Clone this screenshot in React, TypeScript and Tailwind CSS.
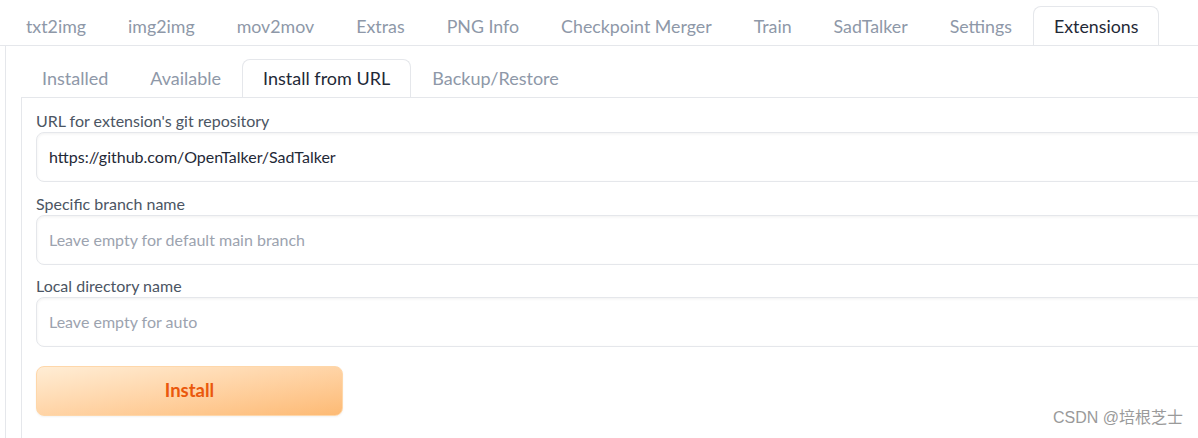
import React from "react";

const topTabs = ["txt2img", "img2img", "mov2mov", "Extras", "PNG Info", "Checkpoint Merger", "Train", "SadTalker", "Settings", "Extensions"];
const subTabs = ["Installed", "Available", "Install from URL", "Backup/Restore"];

function Field({ label, value, placeholder }: { label: string; value?: string; placeholder?: string }) {
  return (
    <div className="flex flex-col">
      <div className="text-[16px] leading-[20px] text-[#4b5563]">{label}</div>
      <div className="mt-[1px] h-[50px] rounded-[8px] border border-[#e5e7eb] bg-white shadow-[inset_0_1px_3px_rgba(0,0,0,0.06)] flex items-center pl-[12px] text-[16px]">
        {value ? <span className="text-[#1f2937]">{value}</span> : <span className="text-[#9ca3af]">{placeholder}</span>}
      </div>
    </div>
  );
}

export default function App() {
  return (
    <div className="relative w-[1198px] h-[438px] overflow-hidden bg-white" style={{ fontFamily: "Lato, 'Noto Sans', sans-serif" }}>
      <div className="flex pl-[5px] pt-[6px] border-b border-[#e5e7eb] w-[1260px]">
        {topTabs.map((t) => {
          const active = t === "Extensions";
          return (
            <div
              key={t}
              className={
                active
                  ? "px-[20px] h-[39px] flex items-center text-[17.8px] text-[#1f2937] border border-b-0 border-[#e5e7eb] rounded-t-[8px] bg-white -mb-px pt-[1px]"
                  : "px-[20px] h-[39px] flex items-center text-[17.8px] text-[#8e98a8] border border-transparent pt-[1px]"
              }
            >
              {t}
            </div>
          );
        })}
      </div>
      <div className="ml-[5px] border-l border-[#e5e7eb] pl-[15px] pt-[13px] w-[1260px] h-[400px]">
        <div className="flex border-b border-[#e5e7eb]">
          {subTabs.map((t) => {
            const active = t === "Install from URL";
            return (
              <div
                key={t}
                className={
                  active
                    ? "px-[20px] h-[38px] flex items-center text-[18px] text-[#1f2937] border border-b-0 border-[#e5e7eb] rounded-t-[8px] bg-white -mb-px"
                    : "px-[20px] h-[38px] flex items-center text-[18px] text-[#8e98a8] border border-transparent"
                }
              >
                {t}
              </div>
            );
          })}
        </div>
        <div className="border-l border-[#e5e7eb] pl-[14px] pt-[13px] h-[400px] flex flex-col gap-[11.5px]">
          <Field label="URL for extension's git repository" value="https://github.com/OpenTalker/SadTalker" />
          <Field label="Specific branch name" placeholder="Leave empty for default main branch" />
          <Field label="Local directory name" placeholder="Leave empty for auto" />
          <button className="mt-[7px] w-[307px] h-[50px] rounded-[8px] border border-[#fed7aa] bg-gradient-to-br from-[#ffedd5] to-[#fdba74] text-[#ea580c] text-[18.5px] font-bold shadow-[0_1px_2px_rgba(0,0,0,0.05)]">
            Install
          </button>
        </div>
      </div>
      <div className="absolute right-[15px] bottom-[8px] text-[16px] text-[#9a9a9a]" style={{ fontFamily: "'Liberation Sans', 'Noto Sans CJK SC', sans-serif" }}>
        CSDN @培根芝士
      </div>
    </div>
  );
}
